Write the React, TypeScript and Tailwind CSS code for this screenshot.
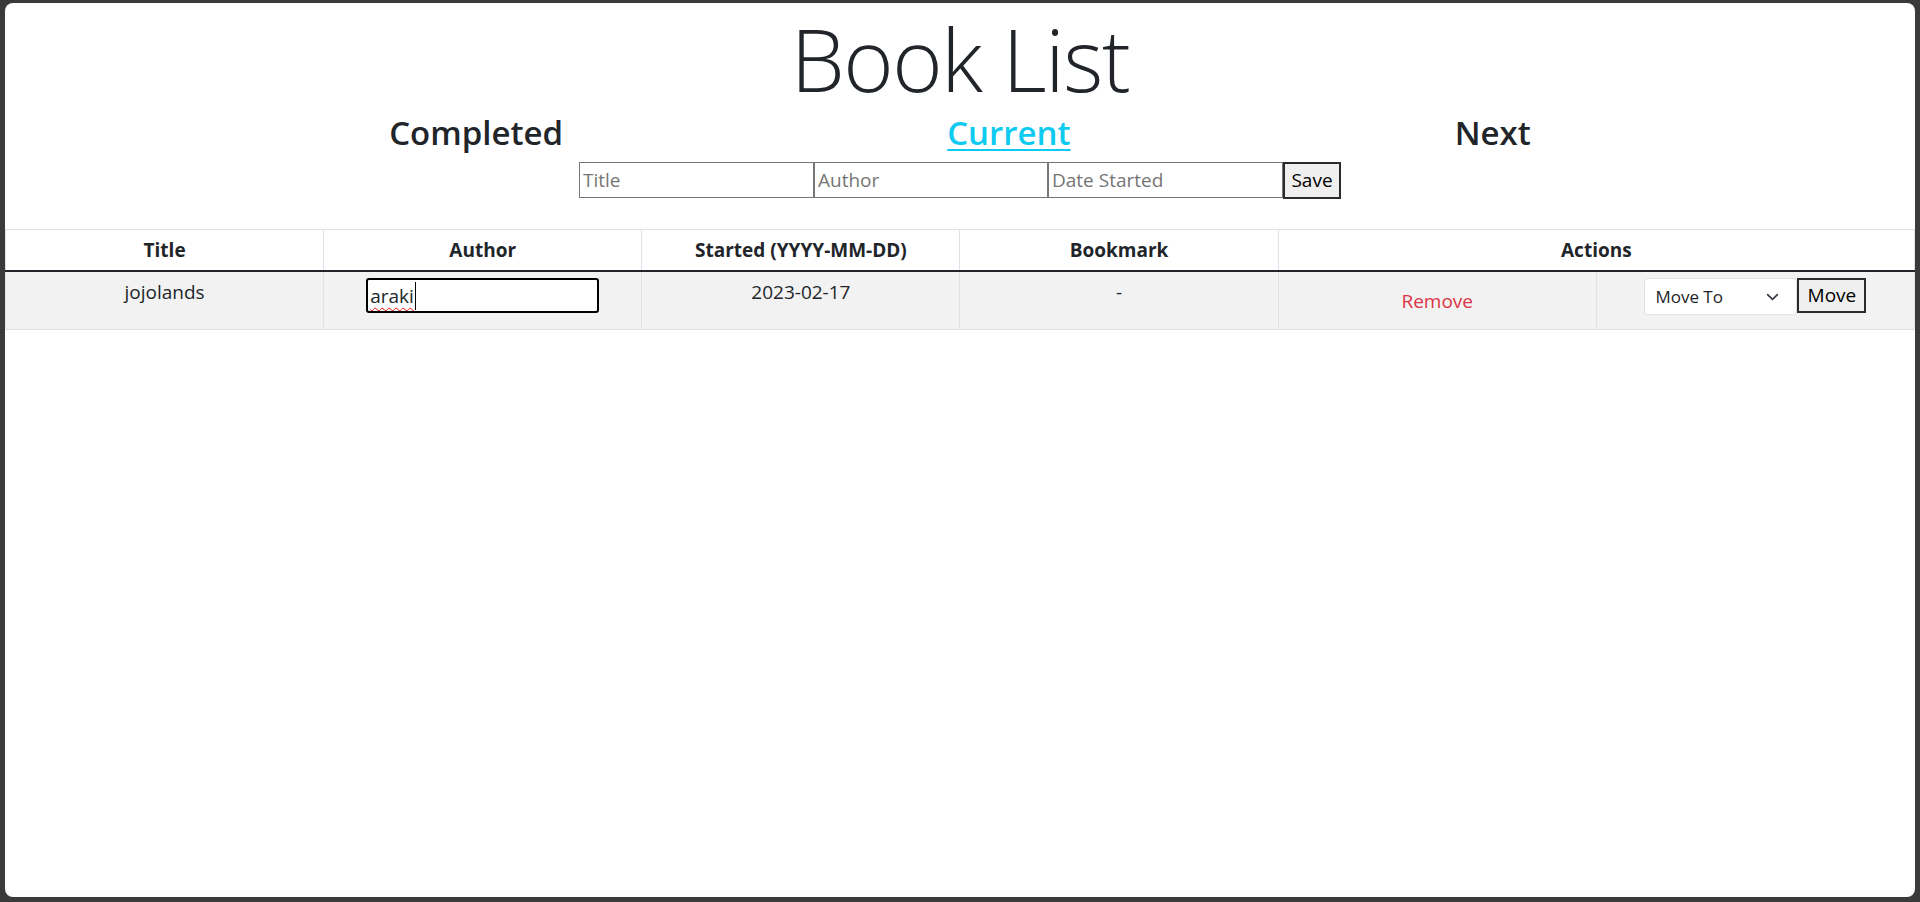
const HEADERS = ["Title", "Author", "Started (YYYY-MM-DD)", "Bookmark"];

function Chevron() {
  return (
    <svg width="13" height="13" viewBox="0 0 16 16" className="pointer-events-none absolute right-[18px] top-1/2 -translate-y-1/2">
      <path d="m2 5 6 6 6-6" fill="none" stroke="#343a40" strokeWidth="2" strokeLinecap="round" strokeLinejoin="round" />
    </svg>
  );
}

export default function App() {
  return (
    <div className="h-[902px] w-full bg-[#3a3a3a] pt-[3px] px-[5px] pb-[5px] font-['Open_Sans',sans-serif] text-[#212529]">
      <div className="h-full bg-white rounded-[8px]">
        <h1 className="pt-[1.5px] text-center text-[86px] leading-[108px] font-light tracking-[-1.4px]">Book List</h1>

        {/* list switcher */}
        <nav className="mt-[0.5px] flex justify-evenly text-[33px] leading-[40px] font-semibold">
          <a className="cursor-pointer">Completed</a>
          <a className="cursor-pointer text-[#0dcaf0] underline decoration-2 underline-offset-[4px]">Current</a>
          <a className="cursor-pointer">Next</a>
        </nav>

        <form className="mt-[9px] flex justify-center text-[19px]" onSubmit={(e) => e.preventDefault()}>
          <input placeholder="Title" className="h-[36px] w-[235px] border border-[#767676] px-[3px] placeholder:text-[#757575] outline-none" />
          <input placeholder="Author" className="h-[36px] w-[234px] border border-[#767676] px-[3px] placeholder:text-[#757575] outline-none" />
          <input placeholder="Date Started" className="h-[36px] w-[235px] border border-[#767676] px-[3px] placeholder:text-[#757575] outline-none" />
          <button className="h-[37px] w-[58px] border-2 border-[#2b2b2b] bg-[#efefef] text-black">Save</button>
        </form>

        <table className="mt-[30px] w-full table-fixed border-collapse text-[19px] leading-[29px]">
          <colgroup>
            <col className="w-1/6" />
            <col className="w-1/6" />
            <col className="w-1/6" />
            <col className="w-1/6" />
            <col className="w-1/6" />
            <col className="w-1/6" />
          </colgroup>
          <thead>
            <tr className="border-t border-[#dee2e6] border-b-2 border-b-[#212529]">
              {HEADERS.map((h) => (
                <th key={h} className="border-x border-[#dee2e6] py-[5.5px] px-[5px] font-bold text-center">{h}</th>
              ))}
              <th colSpan={2} className="border-x border-[#dee2e6] py-[5.5px] px-[5px] font-bold text-center">Actions</th>
            </tr>
          </thead>
          <tbody>
            <tr className="bg-[#f2f2f2] border-b border-[#dee2e6] align-top text-center">
              <td className="border-x border-[#dee2e6] pt-[6px] pb-[5px] px-[5px]">jojolands</td>
              <td className="border-x border-[#dee2e6] pt-[6px] pb-[5px] px-[5px]">
                <div className="mx-auto flex h-[35px] w-[233px] items-center rounded-[3px] border-2 border-black bg-white px-[2px] text-left leading-[26px]">
                  <span className="underline decoration-wavy decoration-[#e81010] decoration-1 underline-offset-[4px]">araki</span>
                  <span className="ml-px h-[28px] w-px bg-black" />
                </div>
              </td>
              <td className="border-x border-[#dee2e6] pt-[6px] pb-[5px] px-[5px]">2023-02-17</td>
              <td className="border-x border-[#dee2e6] pt-[6px] pb-[5px] px-[5px]">-</td>
              <td className="border-x border-[#dee2e6] pt-[6px] pb-[5px] px-[5px]">
                <button className="h-[46px] px-[14px] text-[#dc3545]">Remove</button>
              </td>
              <td className="border-x border-[#dee2e6] pt-[6px] pb-[5px] px-[5px]">
                <div className="flex justify-center">
                  <div className="relative">
                    <select className="h-[37px] w-[153px] appearance-none rounded-[4px] border border-[#dee2e6] bg-white pl-[10px] text-[17px] text-[#212529] outline-none">
                      <option>Move To</option>
                      <option>Completed</option>
                      <option>Next</option>
                    </select>
                    <Chevron />
                  </div>
                  <button className="h-[35px] w-[69px] border-2 border-[#2b2b2b] bg-[#efefef] text-black">Move</button>
                </div>
              </td>
            </tr>
          </tbody>
        </table>
      </div>
    </div>
  );
}
